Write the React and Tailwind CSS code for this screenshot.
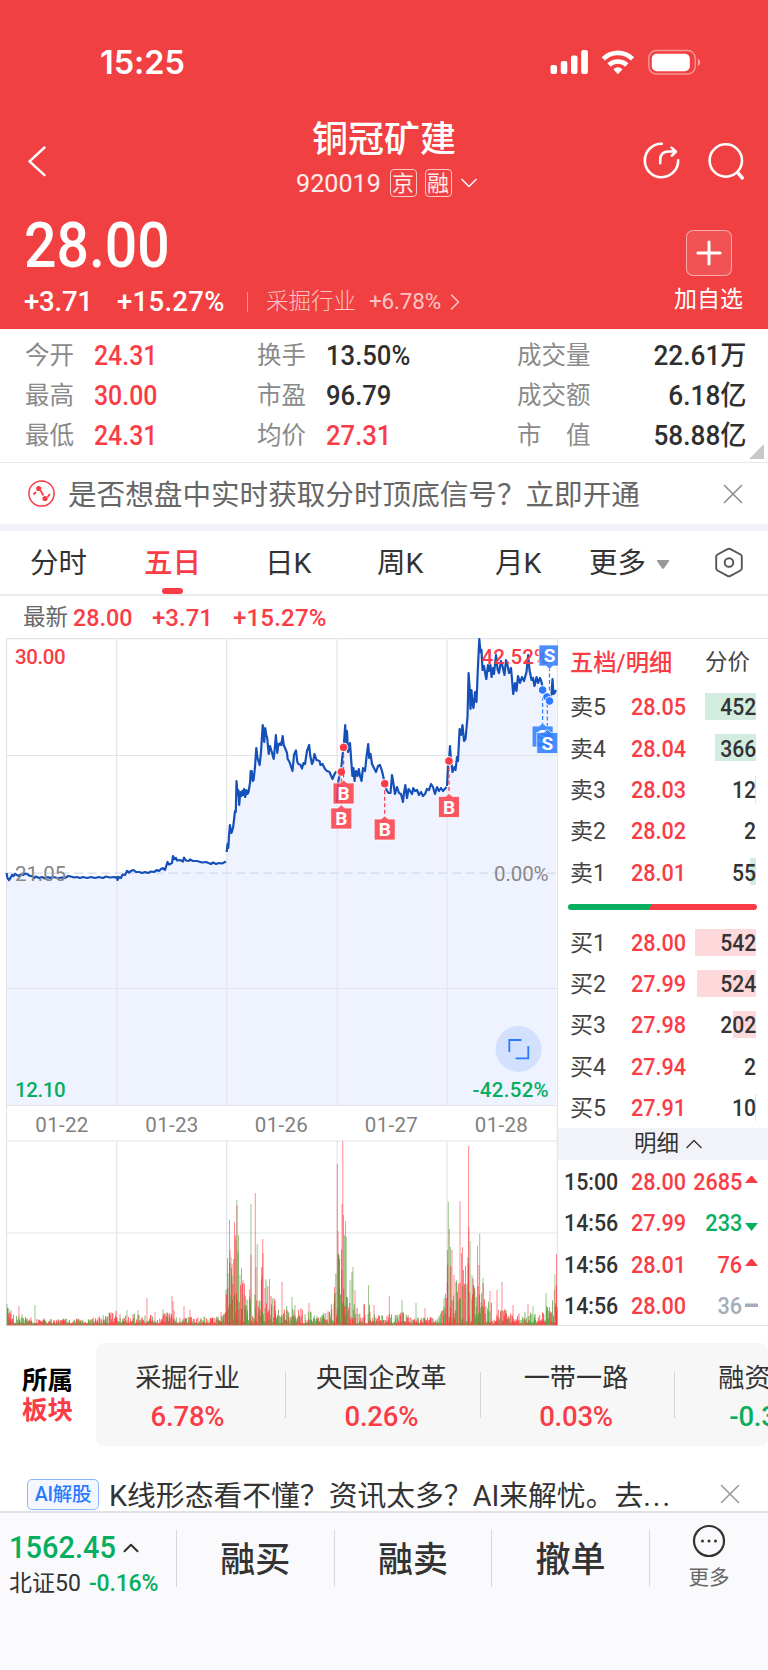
import React from 'react';
import { ChevronDown, ChevronRight, ChevronUp, Plus, X } from 'lucide-react';

const STATS = [
    [
        { label: '今开', value: '24.31', up: true },
        { label: '换手', value: '13.50%' },
        { label: '成交量', value: '22.61万' }
    ],
    [
        { label: '最高', value: '30.00', up: true },
        { label: '市盈', value: '96.79' },
        { label: '成交额', value: '6.18亿' }
    ],
    [
        { label: '最低', value: '24.31', up: true },
        { label: '均价', value: '27.31', up: true },
        { label: '市　值', value: '58.88亿' }
    ]
];

const ASKS = [
    { label: '卖5', price: '28.05', volume: 452, bar: 51 },
    { label: '卖4', price: '28.04', volume: 366, bar: 41 },
    { label: '卖3', price: '28.03', volume: 12, bar: 1 },
    { label: '卖2', price: '28.02', volume: 2, bar: 0 },
    { label: '卖1', price: '28.01', volume: 55, bar: 6 }
];

const BIDS = [
    { label: '买1', price: '28.00', volume: 542, bar: 61 },
    { label: '买2', price: '27.99', volume: 524, bar: 59 },
    { label: '买3', price: '27.98', volume: 202, bar: 23 },
    { label: '买4', price: '27.94', volume: 2, bar: 0 },
    { label: '买5', price: '27.91', volume: 10, bar: 1 }
];

const TRADES = [
    { time: '15:00', price: '28.00', volume: 2685, side: 'buy' },
    { time: '14:56', price: '27.99', volume: 233, side: 'sell' },
    { time: '14:56', price: '28.01', volume: 76, side: 'buy' },
    { time: '14:56', price: '28.00', volume: 36, side: 'flat' }
];

const SECTORS = [
    { name: '采掘行业', change: '6.78%', up: true },
    { name: '央国企改革', change: '0.26%', up: true },
    { name: '一带一路', change: '0.03%', up: true },
    { name: '融资融券', change: '-0.37%', up: false }
];

// One price line per trading day
const PRICE_LINES = [
    '6.5,873 7.5,878 9,880 10.5,878 12,875 13.5,876 15,874 17,875 19,876 21,874.5 23,875 25,873.5 28,874.5 30,876 32,876 34,878 36,876.5 39,878 42,877 45,878.5 48,877 50,878 53,877 58,878 62,877.5 65,878 68,876 71,876.5 74,877.5 77,877 80,878 83,877 87,878 91,877 95,878 99,877 103,878 106,876.5 110,877.5 114,877 116.7,878',
    '116.7,876 117.5,880 119,877 121,878 122.5,874.5 125,875 127,871 129,872.5 131,871 133.5,870 136,872 139,872 142,873 145,872 148,873 151,871.5 154,872 157,870 159,871 161,869 163,868 165,870 167.5,862 169,864.5 172,863 173,856 174.5,859 176,858 177,860.5 180,860 183,861.5 184,857.5 186,860.5 189,861 190,859.5 193,861 197,861 202,862.5 206,862 211,864 213,862.5 216,864 219,863 222,863.5 226,861.5',
    '226.7,852 227.5,844 228.3,848 229,836 229.9,825 231.5,833 233,828 234,820 235,811 235.8,812 236.5,781 237.6,795 238.3,790 239.2,805 240.3,792 241.5,796 242.3,791 243.3,795 244,789 245.2,797 246.3,790 247.5,794 248.5,792 250,783 250.7,771 251.7,771 252.7,781 253.6,780 255,767 256.3,748 257.5,758 259.7,765 261,752 262.7,725 263.7,735 264.2,742 265.2,728 266.3,735 267.2,738 268.7,754 270,746 271.5,751 273.7,759 274.6,750 275.9,735 277.3,753 278.3,744 279.3,745 280.3,743 281.3,745 282.7,736 283.7,745 285.5,749 287,753 287.7,759 289.5,762 292.5,771 294,755 295.2,752 296,750.5 297.3,762 298.5,764 300.5,765 302,768.5 303.5,763 305,764 307,751 309.2,745 310.3,756 312,764 313.3,761 314.5,754 316.5,760 319.5,761 320.5,765 322.5,764 325,769 327,771 329.5,772 332.5,779 335,773 336.5,771.5',
    '337,803 338.5,780 340,774 341,771 342.3,757 343.7,747 345.2,725 346,742 347,731 348,752 350,743 351.5,764 352.4,776 353.5,768 354.5,781 356,771 357.5,776 358.8,769 360,776 361.5,781 363,768 365,771 366.5,757 368.2,744 369.2,758 370.5,754 372,764 374,768 376,772 378,766 380,765 382,771 384.5,782 386.5,790 388.5,793 390.5,793 392,775 393.5,784 395,794 397,787 399,793 401,794 403,802 404,793 405.3,785 407,798 408.5,789 410,791 412,794 413.3,788 415,791 417,790 419,795 421,792 423,796 425,794 427,789 429,790 431,784 433,787 435,794 437,787 439,791 441,788 443,791 446.5,787',
    '447,786 448,767 449,761 450,746 451,760 452.5,772 454.5,767 455.5,770 457,757 458,761 459.6,729 461,735 462.5,725 464,741 465.5,739 467.5,717 468.6,673 469.8,690 470.5,709 471.5,690 472.3,702 473.5,708 475,692 476.5,702 477.7,672 479.3,639 480.5,652 481.5,650 482.5,670 484,666 485,672 486.3,679 488,665 489,671 490.5,665 491.5,677 493,668 494,674 496,655 497.5,669 499,673 501,661 502.5,666 504.5,675 506,660 507.5,665 509,673 511,668 512,679 513.2,694 515,683 516.5,691 518,676 520,683 522,677 524,681 526.5,672 528.2,655 529.5,670 531.5,680 533,678 534.5,686 536.5,677 538,683 540,678 541.5,682 543,690 547,697 549.5,701 551.5,694 552.5,679 553.5,694 554.5,693 556,690'
];

// [x, height, color]
const VOLUME_PEAKS = [
    [7, 21, 'g'], [9, 16, 'g'], [11, 15, 'r'], [19, 19, 'r'], [22, 11, 'g'], [35, 20, 'g'], [44, 7, 'r'],
    [106, 9, 'r'], [113, 12, 'r'], [120, 11, 'r'], [127, 15, 'g'], [138, 15, 'g'], [147, 27, 'r'], [155, 13, 'r'],
    [163, 16, 'g'], [167, 13, 'r'], [172, 29, 'r'], [173, 24, 'r'], [184, 19, 'r'], [190, 15, 'r'], [204, 9, 'g'], [221, 13, 'r'],
    [227.5, 67, 'r'], [228, 52, 'g'], [229.5, 105, 'r'], [230, 75, 'r'], [231, 68, 'g'], [232, 61, 'r'], [234.5, 103, 'r'],
    [236, 85, 'r'], [236.8, 125, 'g'], [237, 120, 'r'], [238.5, 90, 'g'], [240, 50, 'g'], [241.5, 57, 'r'], [243, 45, 'r'],
    [251, 121, 'g'], [251, 70, 'r'], [255.3, 132, 'r'], [256, 58, 'r'], [257.2, 81, 'g'], [262, 50, 'r'], [262.7, 86, 'r'],
    [263, 72, 'r'], [265, 37, 'r'], [269.5, 46, 'r'], [275, 24, 'r'], [282, 43, 'r'], [292, 28, 'g'], [295, 20, 'g'],
    [309, 22, 'r'], [334.5, 38, 'r'], [337.3, 161, 'r'], [338, 94, 'r'], [339, 70, 'g'], [342, 121, 'r'], [342.8, 184, 'r'],
    [343.5, 110, 'g'], [344.5, 90, 'g'], [345.6, 104, 'r'], [346.2, 88, 'g'], [350, 45, 'g'], [353, 58, 'g'], [355, 35, 'r'],
    [368.5, 40, 'g'], [374, 20, 'r'], [389.3, 29, 'r'], [402, 25, 'g'], [416, 22, 'g'], [425, 17, 'r'], [444, 27, 'g'],
    [447.5, 75, 'r'], [448.3, 123, 'g'], [449.3, 96, 'r'], [450.5, 78, 'g'], [452, 75, 'r'], [454, 50, 'r'], [460, 124, 'r'],
    [461.5, 72, 'r'], [462.5, 78, 'r'], [465, 40, 'r'], [468.6, 179, 'r'], [468.8, 98, 'r'], [470, 84, 'g'], [472, 50, 'g'],
    [477.5, 79, 'r'], [479.7, 91, 'g'], [479, 60, 'r'], [483, 47, 'g'], [490, 34, 'r'], [497, 35, 'r'], [502, 43, 'r'],
    [513, 20, 'r'], [528, 21, 'r'], [533, 19, 'g'], [546, 32, 'g'], [554.3, 35, 'r'], [554.9, 51, 'g'], [556.5, 71, 'r']
];

// Height envelope for the dense low bars
const VOLUME_ENVELOPE = [
    [6, 18], [16, 9], [30, 8], [45, 5], [90, 5], [115, 13], [130, 10], [160, 8], [172, 16], [178, 8], [210, 6], [224, 12],
    [227, 60], [236, 95], [243, 50], [247, 30], [256, 65], [263, 60], [270, 28], [282, 20], [300, 16], [320, 9], [330, 14],
    [337, 70], [346, 95], [352, 50], [358, 17], [368, 22], [376, 8], [402, 14], [412, 6], [437, 7], [444, 18], [449, 95],
    [454, 40], [461, 75], [469, 85], [474, 35], [480, 60], [488, 25], [500, 18], [515, 12], [540, 12], [550, 22], [557, 50]
];

const envelopeAt = (x) => {
    const i = VOLUME_ENVELOPE.findIndex(([ex]) => ex > x);
    if (i <= 0) return 6;
    const [x0, h0] = VOLUME_ENVELOPE[i - 1];
    const [x1, h1] = VOLUME_ENVELOPE[i];
    return h0 + ((h1 - h0) * (x - x0)) / (x1 - x0);
};

const buildVolume = () => {
    let seed = 920019;
    const rand = () => {
        seed = (seed * 1103515245 + 12345) % 2147483648;
        return seed / 2147483648;
    };
    const bars = [];
    for (let x = 7; x < 557; x += 0.46) {
        const r = rand();
        const h = 1.5 + envelopeAt(x) * r * r;
        bars.push([x, h, rand() > 0.44 ? 'r' : 'g']);
    }
    return bars;
};

const VOLUME_BARS = buildVolume();

const BUYS = [
    { x: 341.3, y: 772, top: 808 },
    { x: 343.6, y: 747.4, top: 783 },
    { x: 384.7, y: 783.7, top: 819 },
    { x: 449, y: 761, top: 796.5 }
];

function StatusBar() {
    return (
        <div className="flex h-[124px] justify-between pl-[100px] pr-[67px] pt-[44px]">
            <span className="h-9 font-[family-name:Inter,sans-serif] text-[32.5px] font-semibold leading-[37px] tracking-[-0.1px]">15:25</span>
            <svg className="h-9 w-[152px]" viewBox="549 44 152 36" fill="#fff">
                <rect x="550.5" y="65" width="6.5" height="9" rx="2" />
                <rect x="560.8" y="61" width="6.5" height="13" rx="2" />
                <rect x="571" y="55.5" width="6.5" height="18.5" rx="2" />
                <rect x="581.2" y="50" width="6.7" height="24" rx="2" />
                <g fill="none" stroke="#fff" strokeWidth="4.6">
                    <path d="M603.3 58.8a21 21 0 0 1 29.2 0" />
                    <path d="M609 65a13 13 0 0 1 17.8 0" />
                </g>
                <path d="M613.3 69.3q4.6-4 9.2 0l-4.6 4.9z" />
                <rect x="648.8" y="50.5" width="46.4" height="23.5" rx="7.5" fill="none" stroke="#fff" strokeOpacity=".45" strokeWidth="1.4" />
                <rect x="651.8" y="53.7" width="38" height="17.5" rx="5" />
                <path d="M697.8 58.5q2.4 1 2.4 3.8t-2.4 3.8z" fillOpacity=".5" />
            </svg>
        </div>
    );
}

function Header() {
    return (
        <header className="h-[329px] bg-[#f04042] text-white">
            <StatusBar />
            <div className="relative h-[86px]">
                <div className="flex h-[74px] items-center justify-between pl-[27px] pr-[23px]">
                    <svg className="h-[32px] w-[20px]" viewBox="0 0 20 32" fill="none" stroke="#fff" strokeWidth="2.4" strokeLinecap="round" strokeLinejoin="round">
                        <path d="M17.5 2.5L2.5 16.3l15 13.8" />
                    </svg>
                    <svg className="h-10 w-[104px]" viewBox="641 141 104 40" fill="none" stroke="#fff" strokeWidth="2.6" strokeLinecap="round" strokeLinejoin="round">
                        <path d="M661.8 143.8a16.7 16.7 0 1 0 16.4 16.4" />
                        <path d="M660.2 163.2v-3.2q0-8.5 8.5-8.5h7M671.5 147.6l4.5 4-4.2 4" />
                        <circle cx="725.8" cy="160.5" r="16.2" />
                        <path d="M738 172.8l4.2 5" strokeWidth="3.6" />
                    </svg>
                </div>
                <div className="absolute inset-x-0 top-[-8px] flex flex-col items-center">
                    <h1 className="h-[46px] pt-px text-[36px] font-medium leading-[46px]">铜冠矿建</h1>
                    <div className="mt-[6px] flex h-[30px] items-center pl-[10px] text-[26.5px] text-white/90">
                        <span className="w-[94px] origin-left scale-x-[0.95]">920019</span>
                        <span className="mr-2 flex h-7 w-[27px] items-center justify-center rounded-[4px] border border-white/70 text-[22px]">京</span>
                        <span className="mr-[3px] flex h-7 w-[27px] items-center justify-center rounded-[4px] border border-white/70 text-[22px]">融</span>
                        <ChevronDown className="h-[28px] w-[28px]" strokeWidth={1.5} />
                    </div>
                </div>
            </div>
            <div className="flex h-[119px] justify-between pl-[24px] pr-[25px]">
                <div>
                    <div className="h-[70px] origin-left scale-x-[0.9] text-[63.5px] font-medium leading-[71px]">28.00</div>
                    <div className="flex h-[44px] items-center text-[27.5px] font-medium">
                        <span className="w-[93px] tracking-[-0.2px]">+3.71</span>
                        <span className="w-[130px] tracking-[0.3px]">+15.27%</span>
                        <span className="mr-[18px] h-5 w-px bg-white/40" />
                        <span className="flex items-center text-[22.5px] font-light text-white/70">
                            <span className="w-[103px]">采掘行业</span>
                            <span className="w-[72px] font-normal tracking-[-0.2px]">+6.78%</span>
                            <ChevronRight className="h-[28px] w-[28px]" strokeWidth={1.3} />
                        </span>
                    </div>
                </div>
                <div className="flex flex-col items-center pt-[20px]">
                    <div className="flex h-[46px] w-[46px] items-center justify-center rounded-[7px] border border-white/50 bg-white/10">
                        <Plus className="h-[38px] w-[38px]" strokeWidth={1.9} />
                    </div>
                    <span className="mt-[8px] text-[23px] leading-[32px]">加自选</span>
                </div>
            </div>
        </header>
    );
}

function Stats() {
    return (
        <section className="relative h-[134px] border-b border-[#e8e8ea] pl-[25px] pr-[22px] pt-[7px]">
            {STATS.map(([a, b, c]) => (
                <div key={a.label} className="flex h-10 items-center text-[27px] font-medium text-[#2f2f2f]">
                    <span className="w-[69px] text-[24.5px] font-normal text-[#8a8a8a]">{a.label}</span>
                    <span className="w-[163px] origin-left scale-x-[0.92] text-[#fa3c46]">{a.value}</span>
                    <span className="w-[69px] text-[24.5px] font-normal text-[#8a8a8a]">{b.label}</span>
                    <span className={`w-[191px] origin-left scale-x-[0.95] ${b.up ? 'text-[#fa3c46]' : ''}`}>{b.value}</span>
                    <span className="text-[24.5px] font-normal text-[#8a8a8a]">{c.label}</span>
                    <span className="flex-1 origin-right scale-x-[0.97] text-right">{c.value}</span>
                </div>
            ))}
            <svg className="absolute bottom-[3px] right-1 h-[15px] w-[15px]" viewBox="0 0 15 15"><path d="M15 0v15H0z" fill="#c8c8c8" /></svg>
        </section>
    );
}

function SignalNotice() {
    return (
        <div className="flex h-[68px] items-center justify-between border-b-[7px] border-[#f2f3f8] pl-[28px] pr-[18px]">
            <div className="flex items-center">
                <svg className="h-[27px] w-[27px]" viewBox="0 0 27 27" fill="none" stroke="#fa3c46" strokeWidth="1.5">
                    <circle cx="13.5" cy="13.5" r="12.6" />
                    <path d="M5.5 14.5l2.5-2.5M12.5 10.5l3 5M19.5 17l2.5-3" strokeWidth="1.8" />
                    <circle cx="10.7" cy="8.5" r="2.6" fill="#fa3c46" stroke="none" />
                    <circle cx="17" cy="18.5" r="2.6" fill="#fa3c46" stroke="none" />
                </svg>
                <span className="ml-[13px] pt-[3px] text-[28.6px] leading-none text-[#666]">是否想盘中实时获取分时顶底信号？立即开通</span>
            </div>
            <X className="h-[34px] w-[34px] text-[#8c8c8c]" strokeWidth={1.1} />
        </div>
    );
}

function Tabs() {
    return (
        <nav className="flex h-[65px] items-center border-b-2 border-[#ebebee] pl-[30px] pt-[3px] text-[28.5px] text-[#333]">
            <span className="w-[114px]">分时</span>
            <span className="relative flex h-full w-[121px] items-center font-medium text-[#fa3c46]">
                五日
                <span className="absolute bottom-0 left-[18px] h-[6px] w-[21px] rounded-full bg-[#fa3c46]" />
            </span>
            <span className="w-[112px]">日K</span>
            <span className="w-[118px]">周K</span>
            <span className="w-[94px]">月K</span>
            <span className="w-[67px]">更多</span>
            <svg className="mr-[44px] h-[9px] w-[14px] shrink-0" viewBox="0 0 14 9"><path d="M1.5 0h11q1.2.3.5 1.3L8 8.3q-1 1-2 0L1 1.3Q.3.3 1.5 0z" fill="#999" /></svg>
            <svg className="mb-[4px] h-[31px] w-[30px] shrink-0" viewBox="0 0 30 31" fill="none" stroke="#555" strokeWidth="1.9" strokeLinejoin="round">
                <path d="M13.5 2.1q1.5-.8 3 0l10 5.4q1.3.8 1.3 2.3v11.4q0 1.5-1.3 2.3l-10 5.4q-1.5.8-3 0l-10-5.4q-1.3-.8-1.3-2.3V9.8q0-1.5 1.3-2.3z" />
                <circle cx="15" cy="15.5" r="4.3" />
            </svg>
        </nav>
    );
}

function Marker({ x, top, letter, fill, flip }) {
    return (
        <g>
            <path
                d={flip
                    ? `M${x - 10.5} ${top}h21v21h-7l-3.5 3-3.5-3h-7z`
                    : `M${x - 10.5} ${top}h7l3.5-3 3.5 3h7v21h-21z`}
                fill={fill} fillOpacity=".85" stroke="#fff" strokeOpacity=".7" strokeWidth="1"
            />
            <text x={x} y={top + 17} textAnchor="middle" fontSize="19" fontWeight="700" fill="#fff">{letter}</text>
        </g>
    );
}

function Dot({ x, y, fill }) {
    return <circle cx={x} cy={y} r="4.3" fill={fill} stroke="#fff" strokeWidth="1" />;
}

function Chart() {
    const red = '#fa3c46';
    const blue = '#2b7bff';
    return (
        <svg className="h-[688px] w-[558px] shrink-0" viewBox="0 638 558 688">
            {PRICE_LINES.map((pts) => {
                const xs = pts.split(' ').map((p) => p.split(',')[0]);
                return <polygon key={xs[0]} points={`${xs[0]},1105 ${pts} ${xs[xs.length - 1]},1105`} fill="#eff3ff" />;
            })}
            <g stroke="#e3e4e7" strokeWidth="1.2" fill="none">
                <path d="M6.5 638.6H558M6.5 755.5H557M6.5 988.5H557M6.5 1105.5H557M6.5 1141H557M6.5 1233H557" />
                <path d="M6.5 638V1326M557.3 638V1326" />
                <path d="M116.7 638V1105M226.7 638V1105M337 638V1105M447 638V1105" />
                <path d="M116.7 1141V1325M226.7 1141V1325M337 1141V1325M447 1141V1325" />
            </g>
            <path d="M6.5 873.2H557" stroke="#cfdae6" strokeWidth="1.3" strokeDasharray="9 4.5" />

            {/* Price lines */}
            <g fill="none" stroke="#1550b8" strokeWidth="2.2" strokeLinejoin="round">
                {PRICE_LINES.map((pts) => <polyline key={pts.slice(0, 8)} points={pts} />)}
            </g>

            {/* Axis labels */}
            <g fontSize="20.5" fontWeight="500">
                <text x="15" y="663.5" fill={red} letterSpacing="-.4">30.00</text>
                <text x="15" y="880.5" fill="#888" fontWeight="400" letterSpacing="-.1">21.05</text>
                <text x="15" y="1097" fill="#08ae5f" letterSpacing="-.4">12.10</text>
                <text x="549" y="663.5" fill={red} textAnchor="end">42.52%</text>
                <text x="548.5" y="880.5" fill="#888" textAnchor="end" fontWeight="400" letterSpacing="-.1">0.00%</text>
                <text x="549" y="1097" fill="#08ae5f" textAnchor="end" letterSpacing=".3">-42.52%</text>
            </g>
            <g fontSize="20.5" fill="#808080" textAnchor="middle" letterSpacing=".3">
                <text x="62" y="1131.5">01-22</text>
                <text x="172" y="1131.5">01-23</text>
                <text x="281.5" y="1131.5">01-26</text>
                <text x="391.5" y="1131.5">01-27</text>
                <text x="501.5" y="1131.5">01-28</text>
            </g>

            {/* Trades made by the account holder */}
            {BUYS.map((b) => (
                <g key={b.x}>
                    <path d={`M${b.x} ${b.y}V${b.top - 3}`} stroke={red} strokeWidth="1.2" strokeDasharray="4 2.5" />
                    <Marker x={b.x} top={b.top} letter="B" fill={red} />
                    <Dot x={b.x} y={b.y} fill={red} />
                </g>
            ))}
            <path d="M549.5 667V700M542.6 690V724M547.3 697V731" stroke={blue} strokeWidth="1.2" strokeDasharray="4 2.5" />
            <Marker x={549.5} top={645} letter="S" fill={blue} flip />
            <Marker x={542.6} top={726} letter="S" fill={blue} />
            <Marker x={547.3} top={732.5} letter="S" fill={blue} />
            <Dot x={542.6} y={690} fill={blue} />
            <Dot x={547} y={697} fill={blue} />
            <Dot x={549.5} y={701} fill={blue} />

            {/* Expand button */}
            <circle cx="518.5" cy="1049" r="23" fill="#d3e0fe" />
            <path d="M509.3 1052V1040H521.5M528.3 1046V1058.4H515.7" fill="none" stroke="#2b7bff" strokeWidth="1.8" />

            {/* Volume */}
            {VOLUME_PEAKS.map(([x, h, c], i) => (
                <rect key={i} x={x - 0.5} y={1325 - h} width="1" height={h} fill={c === 'r' ? '#ff2d37' : '#4b9b2f'} fillOpacity=".55" />
            ))}
            {VOLUME_BARS.map(([x, h, c], i) => (
                <rect key={i} x={x} y={1325 - h} width=".9" height={h} fill={c === 'r' ? '#ff2d37' : '#4b9b2f'} fillOpacity=".8" />
            ))}
            <path d="M6.5 1325.4H558" stroke="#e3a9a4" strokeWidth="1" />
        </svg>
    );
}

function DepthRow({ row, barClass }) {
    return (
        <div className="flex h-[41.3px] items-center pl-[12px] pr-[12px] text-[23px]">
            <span className="w-[61px] pt-[4px] text-[#444]">{row.label}</span>
            <span className="w-[59px] origin-left scale-x-[0.94] pt-[4px] font-medium text-[#fa3c46]">{row.price}</span>
            <span className="relative flex h-[27px] flex-1 items-center justify-end pt-[4px] font-medium text-[#333]">
                <span className={`absolute right-0 top-0 h-full ${barClass}`} style={{ width: row.bar }} />
                <span className="relative origin-right scale-x-[0.92]">{row.volume}</span>
            </span>
        </div>
    );
}

function SideIcon({ side }) {
    return (
        <svg className="ml-[3px] h-[14px] w-[13px] shrink-0" viewBox="0 0 13 14">
            {side === 'buy' && <path d="M0 7L6.5-1 13 7z" fill="#fa3c46" />}
            {side === 'sell' && <path d="M0 5l6.5 8L13 5z" fill="#08ae5f" />}
            {side === 'flat' && <rect y="3.5" width="13" height="3.5" fill="#a5adb8" />}
        </svg>
    );
}

const TRADE_COLORS = { buy: 'text-[#fa3c46]', sell: 'text-[#08ae5f]', flat: 'text-[#a5adb8]' };

function OrderBook() {
    return (
        <aside className="flex-1 border-y border-[#e3e4e7] text-[#333]">
            <div className="flex h-[47px] items-center justify-between pl-[12px] pr-[18px] pt-px">
                <span className="text-[23.3px] font-medium text-[#fa3c46]">五档/明细</span>
                <span className="text-[22.5px] text-[#444]">分价</span>
            </div>
            {ASKS.map((row) => <DepthRow key={row.label} row={row} barClass="bg-[#d2ece0]" />)}
            <div className="flex h-[29px] items-center pl-[10px] pr-[11px]">
                <div className="h-[6px] flex-1 rounded-full bg-[linear-gradient(125deg,#08ae5f_43.5%,#fa3c46_43.8%)]" />
            </div>
            {BIDS.map((row) => <DepthRow key={row.label} row={row} barClass="bg-[#fed9dc]" />)}
            <div className="flex h-[32px] items-center justify-center bg-[#f2f3f8] pl-[16px] text-[22.5px]">
                明细
                <ChevronUp className="ml-[1px] h-[28px] w-[28px]" strokeWidth={1.2} />
            </div>
            {TRADES.map((t, i) => (
                <div key={i} className="flex h-[41.4px] items-center pl-[6px] pr-[10px] pt-[5px] text-[23px] font-medium">
                    <span className="w-[67px] origin-left scale-x-[0.93]">{t.time}</span>
                    <span className="w-[57px] origin-left scale-x-[0.94] text-[#fa3c46]">{t.price}</span>
                    <span className={`flex flex-1 items-center justify-end ${TRADE_COLORS[t.side]}`}>
                        <span className="origin-right scale-x-[0.94]">{t.volume}</span>
                        <SideIcon side={t.side} />
                    </span>
                </div>
            ))}
        </aside>
    );
}

function Sectors() {
    return (
        <section className="flex h-[152px] items-start overflow-hidden pt-[17px]">
            <div className="w-[96px] shrink-0 pl-[22px] pt-[22px] text-[25.5px] font-bold leading-[30px] text-black">
                所属
                <div className="text-[#fa3c46]">板块</div>
            </div>
            <div className="flex h-[103px] w-[672px] shrink-0 items-center overflow-hidden rounded-lg bg-[#f7f7f7]">
                {SECTORS.map((s, i) => (
                    <div key={s.name} className="flex shrink-0 items-center">
                        {i > 0 && <span className="h-[46px] w-px bg-[#d4d4d4]" />}
                        <div className={`flex flex-col items-center pt-[7px] ${i > 0 ? 'w-[193.7px] pr-[3px]' : 'w-[189px] pr-[6px]'}`}>
                            <span className="text-[26.2px] leading-[38px] text-[#333]">{s.name}</span>
                            <span className={`text-[27.5px] font-medium leading-[40px] tracking-[-0.2px] ${s.up ? 'text-[#fa3c46]' : 'text-[#08ae5f]'}`}>{s.change}</span>
                        </div>
                    </div>
                ))}
            </div>
        </section>
    );
}

function AiBanner() {
    return (
        <div className="flex h-[33px] items-center pb-px pl-[27px] pr-[21px]">
            <span className="flex h-[31px] w-[72px] shrink-0 items-center justify-center rounded-[5px] border border-[#8db6ff] bg-[#f3f7ff] pt-px text-[19.5px] font-medium tracking-[-0.2px] text-[#2b7bff]">AI解股</span>
            <span className="ml-[10px] flex-1 whitespace-nowrap pt-[5px] text-[28.8px] leading-none text-[#333]">
                K线形态看不懂？资讯太多？AI来解忧。去<span className="tracking-[2px]">...</span>
            </span>
            <X className="h-[34px] w-[34px] text-[#999]" strokeWidth={1.1} />
        </div>
    );
}

function BottomBar() {
    return (
        <footer className="flex h-[160px] items-start border-t-2 border-[#e2e2e4] bg-[#fafafd] text-[#333]">
            <div className="w-[176px] pl-[9px] pt-[15px]">
                <div className="flex h-[40px] items-center text-[31px] font-medium text-[#08ae5f]">
                    <span className="w-[109px] origin-left scale-x-[0.935]">1562.45</span>
                    <ChevronUp className="h-[26px] w-[26px] text-[#333]" strokeWidth={1.9} />
                </div>
                <div className="flex h-[31px] items-center pt-[2px] text-[23px]">
                    <span className="w-[80px]">北证50</span>
                    <span className="font-medium tracking-[-0.2px] text-[#08ae5f]">-0.16%</span>
                </div>
            </div>
            {['融买', '融卖', '撤单'].map((action) => (
                <div key={action} className="mt-[17px] flex h-[57px] w-[157.6px] items-center justify-center border-l border-[#d9d9dd] pt-[6px] text-[35px] font-medium">
                    {action}
                </div>
            ))}
            <div className="mt-[16px] flex h-[58px] flex-1 flex-col items-center justify-center border-l border-[#d9d9dd]">
                <svg className="h-[34px] w-[34px] shrink-0" viewBox="0 0 34 34" fill="#333">
                    <circle cx="17" cy="17" r="15" fill="none" stroke="#333" strokeWidth="2.2" />
                    <circle cx="10.5" cy="17" r="1.5" />
                    <circle cx="17" cy="17" r="1.5" />
                    <circle cx="23.5" cy="17" r="1.5" />
                </svg>
                <span className="mt-[5px] text-[20.5px] leading-[30px] text-[#666]">更多</span>
            </div>
        </footer>
    );
}

export default function App() {
    return (
        <div className="h-[1670px] w-[768px] overflow-hidden bg-white font-[family-name:Roboto,'Noto_Sans_CJK_SC',sans-serif]">
            <Header />
            <Stats />
            <SignalNotice />
            <Tabs />
            <div className="flex h-[42px] items-center pl-[23px] pt-[2px] text-[24px] font-medium text-[#fa3c46]">
                <span className="w-[50px] text-[22.5px] font-normal text-[#666]">最新</span>
                <span className="w-[79px] origin-left scale-x-[0.97]">28.00</span>
                <span className="w-[81px]">+3.71</span>
                <span className="tracking-[0.2px]">+15.27%</span>
            </div>
            <main className="flex h-[688px]">
                <Chart />
                <OrderBook />
            </main>
            <Sectors />
            <AiBanner />
            <BottomBar />
        </div>
    );
}
